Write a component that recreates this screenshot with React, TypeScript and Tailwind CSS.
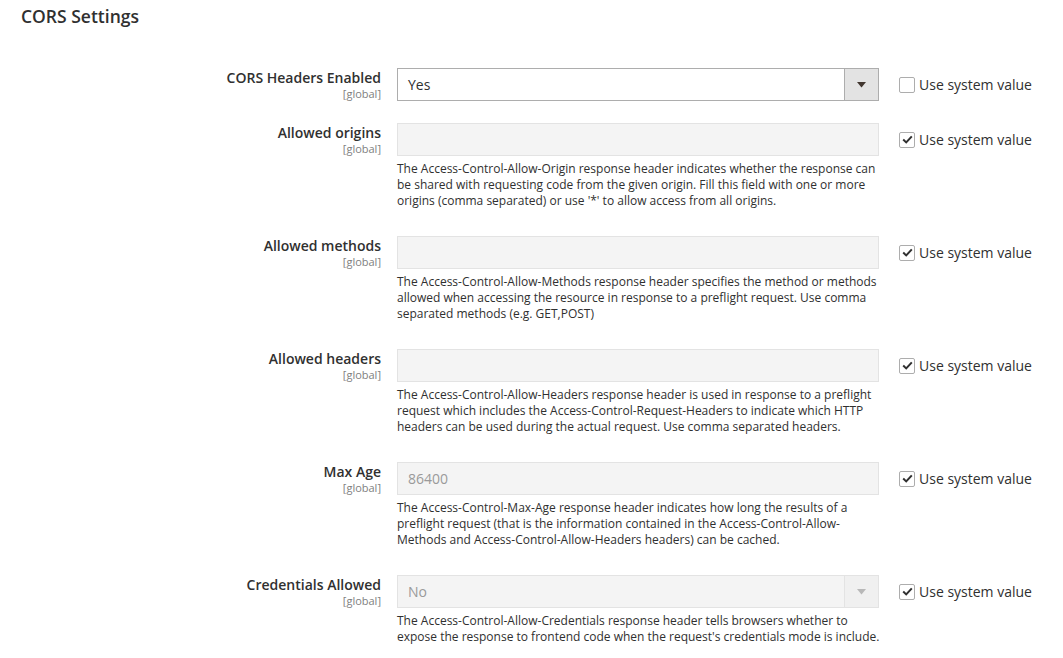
import React from "react";

type Row = {
  label: string;
  type: "select" | "text";
  value?: string;
  disabled: boolean;
  checked: boolean;
  note?: string;
};

const rows: Row[] = [
  { label: "CORS Headers Enabled", type: "select", value: "Yes", disabled: false, checked: false },
  {
    label: "Allowed origins",
    type: "text",
    value: "",
    disabled: true,
    checked: true,
    note:
      "The Access-Control-Allow-Origin response header indicates whether the response can be shared with requesting code from the given origin. Fill this field with one or more origins (comma separated) or use '*' to allow access from all origins.",
  },
  {
    label: "Allowed methods",
    type: "text",
    value: "",
    disabled: true,
    checked: true,
    note:
      "The Access-Control-Allow-Methods response header specifies the method or methods allowed when accessing the resource in response to a preflight request. Use comma separated methods (e.g. GET,POST)",
  },
  {
    label: "Allowed headers",
    type: "text",
    value: "",
    disabled: true,
    checked: true,
    note:
      "The Access-Control-Allow-Headers response header is used in response to a preflight request which includes the Access-Control-Request-Headers to indicate which HTTP headers can be used during the actual request. Use comma separated headers.",
  },
  {
    label: "Max Age",
    type: "text",
    value: "86400",
    disabled: true,
    checked: true,
    note:
      "The Access-Control-Max-Age response header indicates how long the results of a preflight request (that is the information contained in the Access-Control-Allow-Methods and Access-Control-Allow-Headers headers) can be cached.",
  },
  {
    label: "Credentials Allowed",
    type: "select",
    value: "No",
    disabled: true,
    checked: true,
    note:
      "The Access-Control-Allow-Credentials response header tells browsers whether to expose the response to frontend code when the request's credentials mode is include.",
  },
];

function Checkbox({ checked }: { checked: boolean }) {
  return (
    <div className="flex h-[16px] w-[16px] items-center justify-center rounded-[2px] border border-[#adadad] bg-white">
      {checked && (
        <svg width="11" height="9" viewBox="0 0 11 9">
          <path d="M1.2 4.6 L4.2 7.4 L9.8 1.4" fill="none" stroke="#303030" strokeWidth="2" />
        </svg>
      )}
    </div>
  );
}

function Field({ row }: { row: Row }) {
  if (row.type === "select") {
    return (
      <div
        className={
          row.disabled
            ? "flex h-[33px] w-full border border-[#e3e3e3] bg-[#f4f4f4]"
            : "flex h-[33px] w-full border border-[#adadad] bg-white"
        }
      >
        <div
          className={
            row.disabled
              ? "flex flex-1 items-center pl-[10px] text-[14px] text-[#9a9a9a]"
              : "flex flex-1 items-center pl-[10px] text-[14px] text-[#303030]"
          }
        >
          {row.value}
        </div>
        <div
          className={
            row.disabled
              ? "flex w-[34px] items-center justify-center border-l border-[#e3e3e3] bg-[#f0f0f0]"
              : "flex w-[34px] items-center justify-center border-l border-[#adadad] bg-[#e3e3e3]"
          }
        >
          <svg width="9" height="6" viewBox="0 0 9 6">
            <path d="M0 0 L9 0 L4.5 5.5 Z" fill={row.disabled ? "#b8b8b8" : "#41362f"} />
          </svg>
        </div>
      </div>
    );
  }
  return (
    <div className="flex h-[33px] w-full items-center border border-[#e3e3e3] bg-[#f4f4f4] pl-[10px] text-[14px] text-[#9a9a9a]">
      {row.value}
    </div>
  );
}

export default function App() {
  return (
    <div
      className="min-h-[658px] w-[1063px] bg-white text-[#303030]"
      style={{ fontFamily: '"Open Sans", "Noto Sans", sans-serif' }}
    >
      <div className="px-[21px] pt-[4px]">
        <h2 className="text-[17.5px] font-semibold leading-[24px] text-[#303030]">CORS Settings</h2>
      </div>
      <div className="mt-[40px] flex flex-col">
        {rows.map((row) => (
          <div key={row.label} className="flex pb-[22px]">
            <div className="w-[381px] shrink-0 text-right">
              <div className="text-[14px] font-semibold leading-[20px] text-[#303030]">{row.label}</div>
              <div className="text-[11px] leading-[11px] text-[#808080]">[global]</div>
            </div>
            <div className="ml-[16px] w-[482px] shrink-0">
              <Field row={row} />
              {row.note && (
                <p className="mb-[5px] mt-[5px] w-[490px] text-[12px] leading-[16px] text-[#303030]">{row.note}</p>
              )}
            </div>
            <div className="ml-[20px] flex h-[33px] items-center gap-[4px]">
              <Checkbox checked={row.checked} />
              <span className="text-[14px] text-[#303030]">Use system value</span>
            </div>
          </div>
        ))}
      </div>
    </div>
  );
}
